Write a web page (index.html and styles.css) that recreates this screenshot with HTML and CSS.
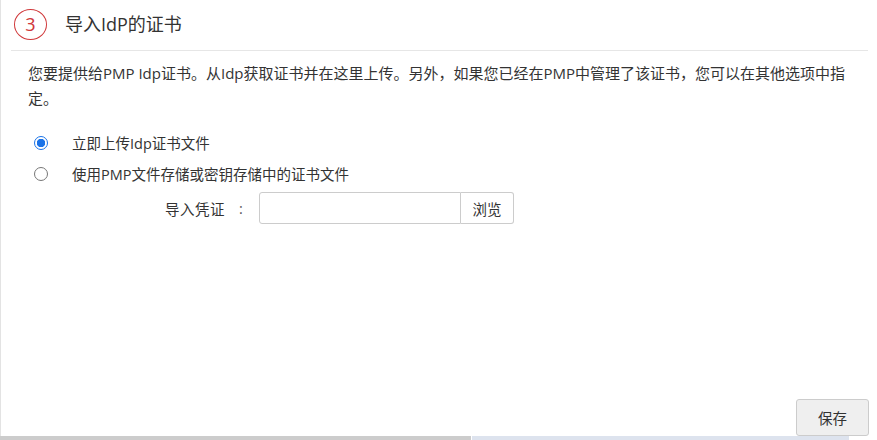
FILE: index.html
```html
<!DOCTYPE html>
<html>
<head>
<meta charset="utf-8">
<link rel="stylesheet" href="styles.css">
</head>
<body>
<div class="page">
  <div class="panel">
    <div class="header">
      <span class="step">3</span>
      <span class="title">导入IdP的证书</span>
    </div>
    <p class="desc">您要提供给PMP Idp证书。从Idp获取证书并在这里上传。另外，如果您已经在PMP中管理了该证书，您可以在其他选项中指定。</p>
    <div class="options">
      <label class="opt"><span class="radio checked"></span><span>立即上传Idp证书文件</span></label>
      <label class="opt"><span class="radio"></span><span>使用PMP文件存储或密钥存储中的证书文件</span></label>
      <div class="field">
        <span class="flabel">导入凭证</span><span class="colon">:</span>
        <div class="file"><span class="fbox"></span><span class="browse">浏览</span></div>
      </div>
    </div>
    <div class="spacer"></div>
    <div class="footer"><button class="save">保存</button></div>
  </div>
  <div class="bottombar"><span class="bb-grey"></span><span class="bb-blue"></span></div>
</div>
</body>
</html>
```
FILE: styles.css
```css
* { box-sizing: border-box; }
html, body { margin: 0; padding: 0; background: #fff; }
body { font-family: "Open Sans", "Noto Sans CJK SC", sans-serif; color: #333; width: 877px; height: 440px; overflow: hidden; }
.page { display: flex; flex-direction: column; height: 440px; }
.panel { flex: 1; border-left: 1px solid #e3e3e3; display: flex; flex-direction: column; }
.header { display: flex; align-items: center; height: 51px; margin: 0 9px 0 10px; border-bottom: 1px solid #e6e6e6; padding-left: 3px; padding-bottom: 2px; }
.step { width: 33px; height: 31px; border: 1px solid #d0393b; border-radius: 50%; display: flex; align-items: center; justify-content: center; color: #d0393b; font-size: 18px; font-family: "Noto Sans", sans-serif; line-height: 1; }
.title { margin-left: 18px; font-size: 18px; color: #333; line-height: 24px; }
.desc { margin: 10px 20px 0 27px; font-size: 15px; line-height: 25px; }
.options { margin-top: 16px; padding-left: 33px; }
.opt { display: flex; align-items: center; height: 31px; font-size: 14.5px; }
.radio { width: 14px; height: 14px; border: 1px solid #777; border-radius: 50%; margin-right: 24px; flex: none; background: #fff; }
.radio.checked { border: 1.5px solid #1a73e8; background: radial-gradient(circle, #1a73e8 0 4px, #fff 4.5px); }
.field { display: flex; align-items: center; margin-top: 3px; margin-left: 131px; font-size: 14.5px; }
.flabel { width: 74px; letter-spacing: 0.5px; }
.colon { width: 20px; color: #555; }
.file { display: flex; height: 32px; }
.fbox { width: 202px; border: 1px solid #ccc; border-radius: 3px 0 0 3px; }
.browse { width: 53px; border: 1px solid #ccc; border-left: none; border-radius: 0 3px 3px 0; display: flex; align-items: center; justify-content: center; background: #fff; }
.spacer { flex: 1; }
.footer { display: flex; justify-content: flex-end; padding-right: 8px; padding-bottom: 0; }
.save { width: 73px; height: 37px; background: #efefef; border: 1px solid #ccc; border-radius: 3px; font-family: "Noto Sans CJK SC", sans-serif; font-size: 14.5px; color: #333; }
.bottombar { display: flex; height: 4px; }
.bb-grey { width: 471px; background: #ccc; }
.bb-blue { width: 377px; background: #dde3ee; margin-left: 1px; }
```
